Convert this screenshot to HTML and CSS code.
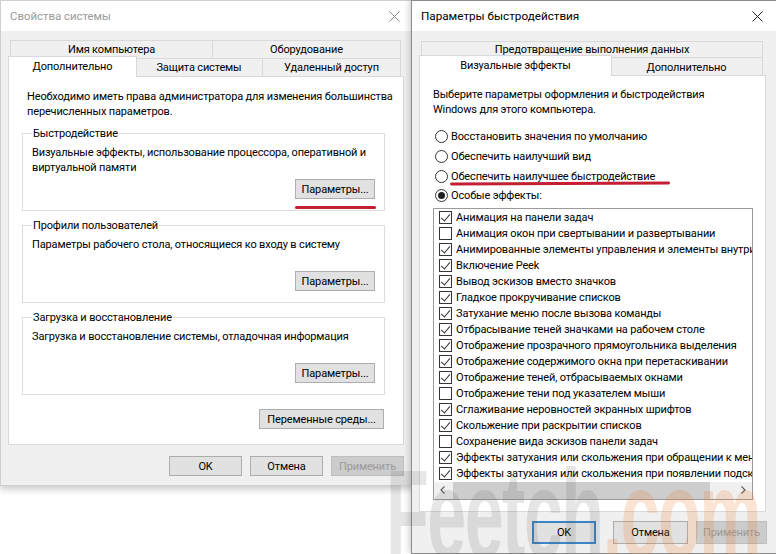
FILE: index.html
```html
<!DOCTYPE html>
<html lang="ru">
<head>
<meta charset="utf-8">
<title>Свойства системы</title>
<link rel="stylesheet" href="styles.css">
</head>
<body>
<div class="desk">
  <section class="win win-sys">
    <header class="titlebar">
      <span class="title">Свойства системы</span>
      <span class="close"><svg width="11" height="11" viewBox="0 0 11 11"><path d="M0.5 0.5L10.5 10.5M10.5 0.5L0.5 10.5" stroke="#8a8a8a" stroke-width="1" fill="none"/></svg></span>
    </header>
    <div class="client">
      <div class="tabs tabs-sys">
        <div class="tabrow">
          <div class="tab w-name">Имя компьютера</div>
          <div class="tab w-hw">Оборудование</div>
        </div>
        <div class="tabrow">
          <div class="tab sel w-adv">Дополнительно</div>
          <div class="tab w-prot">Защита системы</div>
          <div class="tab w-remote">Удаленный доступ</div>
        </div>
      </div>
      <div class="panel panel-sys">
        <p class="intro">Необходимо иметь права администратора для изменения большинства<br>перечисленных параметров.</p>
        <fieldset class="group">
          <legend>Быстродействие</legend>
          <p class="gtext">Визуальные эффекты, использование процессора, оперативной и<br>виртуальной памяти</p>
          <div class="gbtns"><button class="btn btn-par">Параметры...</button></div>
        </fieldset>
        <fieldset class="group">
          <legend>Профили пользователей</legend>
          <p class="gtext">Параметры рабочего стола, относящиеся ко входу в систему</p>
          <div class="gbtns"><button class="btn btn-par">Параметры...</button></div>
        </fieldset>
        <fieldset class="group">
          <legend>Загрузка и восстановление</legend>
          <p class="gtext">Загрузка и восстановление системы, отладочная информация</p>
          <div class="gbtns"><button class="btn btn-par">Параметры...</button></div>
        </fieldset>
        <div class="envrow"><button class="btn btn-env">Переменные среды...</button></div>
      </div>
      <div class="footer footer-sys">
        <button class="btn fbtn">OK</button>
        <button class="btn fbtn">Отмена</button>
        <button class="btn fbtn disabled">Применить</button>
      </div>
    </div>
  </section>

  <section class="win win-perf">
    <header class="titlebar">
      <span class="title">Параметры быстродействия</span>
      <span class="close"><svg width="11" height="11" viewBox="0 0 11 11"><path d="M0.5 0.5L10.5 10.5M10.5 0.5L0.5 10.5" stroke="#222" stroke-width="1" fill="none"/></svg></span>
    </header>
    <div class="client">
      <div class="tabs tabs-perf">
        <div class="tabrow">
          <div class="tab w-dep">Предотвращение выполнения данных</div>
        </div>
        <div class="tabrow">
          <div class="tab sel w-vis">Визуальные эффекты</div>
          <div class="tab w-adv2">Дополнительно</div>
        </div>
      </div>
      <div class="panel panel-perf">
        <p class="intro2">Выберите параметры оформления и быстродействия<br>Windows для этого компьютера.</p>
        <div class="radios">
          <div class="radio"><span class="rb"></span>Восстановить значения по умолчанию</div>
          <div class="radio"><span class="rb"></span>Обеспечить наилучший вид</div>
          <div class="radio"><span class="rb"></span>Обеспечить наилучшее быстродействие</div>
          <div class="radio"><span class="rb on"></span>Особые эффекты:</div>
        </div>
        <div class="listbox">
          <ul class="items">
            <li><span class="cb on"></span>Анимация на панели задач</li>
            <li><span class="cb"></span>Анимация окон при свертывании и развертывании</li>
            <li><span class="cb on"></span>Анимированные элементы управления и элементы внутри окна</li>
            <li><span class="cb on"></span>Включение Peek</li>
            <li><span class="cb on"></span>Вывод эскизов вместо значков</li>
            <li><span class="cb on"></span>Гладкое прокручивание списков</li>
            <li><span class="cb on"></span>Затухание меню после вызова команды</li>
            <li><span class="cb on"></span>Отбрасывание теней значками на рабочем столе</li>
            <li><span class="cb on"></span>Отображение прозрачного прямоугольника выделения</li>
            <li><span class="cb on"></span>Отображение содержимого окна при перетаскивании</li>
            <li><span class="cb on"></span>Отображение теней, отбрасываемых окнами</li>
            <li><span class="cb"></span>Отображение тени под указателем мыши</li>
            <li><span class="cb on"></span>Сглаживание неровностей экранных шрифтов</li>
            <li><span class="cb on"></span>Скольжение при раскрытии списков</li>
            <li><span class="cb"></span>Сохранение вида эскизов панели задач</li>
            <li><span class="cb on"></span>Эффекты затухания или скольжения при обращении к меню</li>
            <li><span class="cb on"></span>Эффекты затухания или скольжения при появлении подсказок</li>
          </ul>
          <div class="hscroll">
            <span class="arrow"><svg width="5" height="8" viewBox="0 0 5 8"><path d="M4.5 0.5L1 4L4.5 7.5" stroke="#606060" stroke-width="1.2" fill="none"/></svg></span>
            <span class="track"><span class="thumb"></span></span>
            <span class="arrow"><svg width="5" height="8" viewBox="0 0 5 8"><path d="M0.5 0.5L4 4L0.5 7.5" stroke="#606060" stroke-width="1.2" fill="none"/></svg></span>
          </div>
        </div>
      </div>
      <div class="footer footer-perf">
        <button class="btn fbtn2 default w-ok">OK</button>
        <button class="btn fbtn2 w-cancel">Отмена</button>
        <button class="btn fbtn2 disabled w-apply">Применить</button>
      </div>
    </div>
  </section>

  <div class="mark mark-btn"></div>
  <div class="mark mark-radio"></div>

  <div class="watermark"><span class="wm-gray">Feetch</span><span class="wm-orange">.com</span></div>
</div>
</body>
</html>
```

FILE: styles.css
```css
* { box-sizing: border-box; margin: 0; padding: 0; }
html, body { width: 776px; height: 554px; overflow: hidden; background: #fff; }
body {
  font-family: Roboto, "Noto Sans", sans-serif;
  font-size: 11px;
  letter-spacing: -0.15px;
  color: #000;
}
.desk { position: relative; width: 776px; height: 554px; overflow: hidden; background: #fff; }

.win {
  position: absolute;
  top: 0;
  background: #f0f0f0;
  display: flex;
  flex-direction: column;
}
.win-sys {
  left: 0;
  width: 418px;
  height: 486px;
  border: 1px solid #cfcfcf;
  box-shadow: 0 3px 7px rgba(0, 0, 0, 0.22);
  z-index: 1;
}
.win-perf {
  left: 411px;
  width: 370px;
  height: 554px;
  border: 1px solid #8c8c8c;
  box-shadow: -2px 0 6px rgba(0, 0, 0, 0.18);
  z-index: 2;
}

.titlebar {
  flex: none;
  height: 30px;
  background: #fff;
  display: flex;
  align-items: center;
  justify-content: space-between;
  padding-left: 9px;
}
.title { font-size: 11.7px; letter-spacing: 0; color: #9a9a9a; }
.win-sys .title { font-size: 11.4px; }
.win-perf .title { color: #000; }
.close { width: 46px; height: 30px; display: flex; align-items: center; justify-content: center; }

.client { flex: 1; display: flex; flex-direction: column; }

/* tabs */
.tabs { display: flex; flex-direction: column; }
.tabs-sys { margin: 9px 0 0 9px; width: 391px; }
.tabs-perf { margin: 10px 0 0 9px; width: 342px; }
.tabrow { display: flex; height: 18px; }
.tabs-perf .tabrow:first-child { height: 16px; }
.tab {
  flex: none;
  background: #f0f0f0;
  border: 1px solid #d9d9d9;
  border-bottom: none;
  display: flex;
  align-items: center;
  justify-content: center;
  white-space: nowrap;
  position: relative;
}
.tab + .tab { border-left: none; }
.tab.sel {
  background: #fff;
  border: 1px solid #d9d9d9;
  border-bottom: none;
  margin: -2px -2px -1px -2px;
  height: 21px;
  padding-bottom: 2px;
  z-index: 3;
}
.tab.sel + .tab { border-left: 1px solid #d9d9d9; }
.w-name { width: 203px; }
.w-hw { width: 188px; }
.w-adv { width: 129px; }
.w-prot { width: 128px; }
.w-remote { width: 138px; }
.w-dep { width: 342px; }
.w-vis { width: 193px; }
.w-adv2 { width: 153px; }
.tabs-perf .w-adv2 { padding-top: 2px; }

/* panels */
.panel { background: #fff; border: 1px solid #d9d9d9; position: relative; z-index: 2; }
.panel-sys { margin-left: 7px; width: 396px; height: 369px; padding: 12px 18px 0 13px; }
.panel-perf { margin-left: 7px; width: 347px; height: 437px; padding: 11px 0 0 13px; }

.intro { line-height: 15px; margin-left: 5px; white-space: nowrap; }
.group {
  border: 1px solid #dcdcdc;
  margin-top: 7px;
  padding: 0 9px 11px 9px;
  width: 363px;
}
.group legend { padding: 0 1px; line-height: 15px; }
.gtext { line-height: 15px; padding-top: 4px; box-sizing: content-box; height: 30px; white-space: nowrap; }
.gbtns { display: flex; justify-content: flex-end; margin-top: 4px; }

.btn {
  font: inherit;
  letter-spacing: inherit;
  color: #000;
  background: #e1e1e1;
  border: 1px solid #adadad;
  height: 20px;
  display: inline-flex;
  align-items: center;
  justify-content: center;
  white-space: nowrap;
}
.btn.disabled { background: #cccccc; border-color: #bfbfbf; color: #9a9a9a; }
.btn-par { width: 80px; }
.envrow { display: flex; justify-content: flex-end; margin-top: 14px; padding-right: 1px; }
.btn-env { width: 125px; }

.footer { display: flex; }
.footer-sys { margin: 11px 0 0 168px; gap: 8px; }
.fbtn { width: 73px; }
.footer-perf { margin: 9px 0 0 120px; }
.fbtn2 { height: 23px; }
.btn.default { border: 2px solid #3c84c8; }
.w-ok { width: 64px; }
.w-cancel { width: 75px; margin-left: 17px; }
.w-apply { width: 71px; margin-left: 8px; }

/* perf panel */
.intro2 { line-height: 15px; white-space: nowrap; }
.radios { margin-top: 10px; }
.radio { height: 19.7px; display: flex; align-items: center; white-space: nowrap; }
.rb {
  width: 13px; height: 13px;
  border: 1px solid #333;
  border-radius: 50%;
  background: #fff;
  margin: 0 3px 0 2px;
  flex: none;
  display: flex; align-items: center; justify-content: center;
}
.rb.on::after { content: ""; width: 7px; height: 7px; border-radius: 50%; background: #222; }

.listbox {
  margin-top: 2px;
  width: 320px;
  height: 292px;
  border: 1px solid #9a9a9a;
  background: #fff;
  display: flex;
  flex-direction: column;
  overflow: hidden;
}
.items { list-style: none; height: 273px; padding-top: 1px; }
.items li {
  height: 16px;
  display: flex;
  align-items: center;
  white-space: nowrap;
  padding-left: 5px;
  overflow: hidden;
}
.cb {
  flex: none;
  width: 13px; height: 13px;
  border: 1px solid #333;
  background: #fff;
  margin-right: 4px;
  position: relative;
}
.cb.on::after {
  content: "";
  position: absolute;
  left: 3px; top: 0px;
  width: 4px; height: 8px;
  border-right: 1.3px solid #333;
  border-bottom: 1.3px solid #333;
  transform: rotate(40deg);
}
.hscroll { height: 17px; display: flex; background: #f0f0f0; }
.arrow { width: 17px; display: flex; align-items: center; justify-content: center; flex: none; }
.track { flex: 1; display: flex; align-items: center; padding: 0 25px 0 2px; }
.thumb { height: 17px; width: 100%; background: #cdcdcd; }

/* red annotations */
.mark { position: absolute; height: 3px; background: #c41e32; border-radius: 2px; z-index: 5; }
.mark-btn { left: 295px; top: 206px; width: 81px; }
.mark-radio { left: 450px; top: 182px; width: 220px; transform: rotate(-0.3deg); }

/* watermark */
.watermark {
  position: absolute;
  left: 386px;
  top: 452px;
  z-index: 6;
  font-family: "Liberation Sans", sans-serif;
  font-weight: bold;
  font-size: 70px;
  line-height: 1;
  letter-spacing: -1.5px;
  transform: scaleY(1.8);
  transform-origin: top left;
  white-space: nowrap;
  pointer-events: none;
}
.wm-gray { color: rgba(80, 80, 80, 0.14); }
.wm-orange { color: rgba(235, 120, 40, 0.2); }
```
